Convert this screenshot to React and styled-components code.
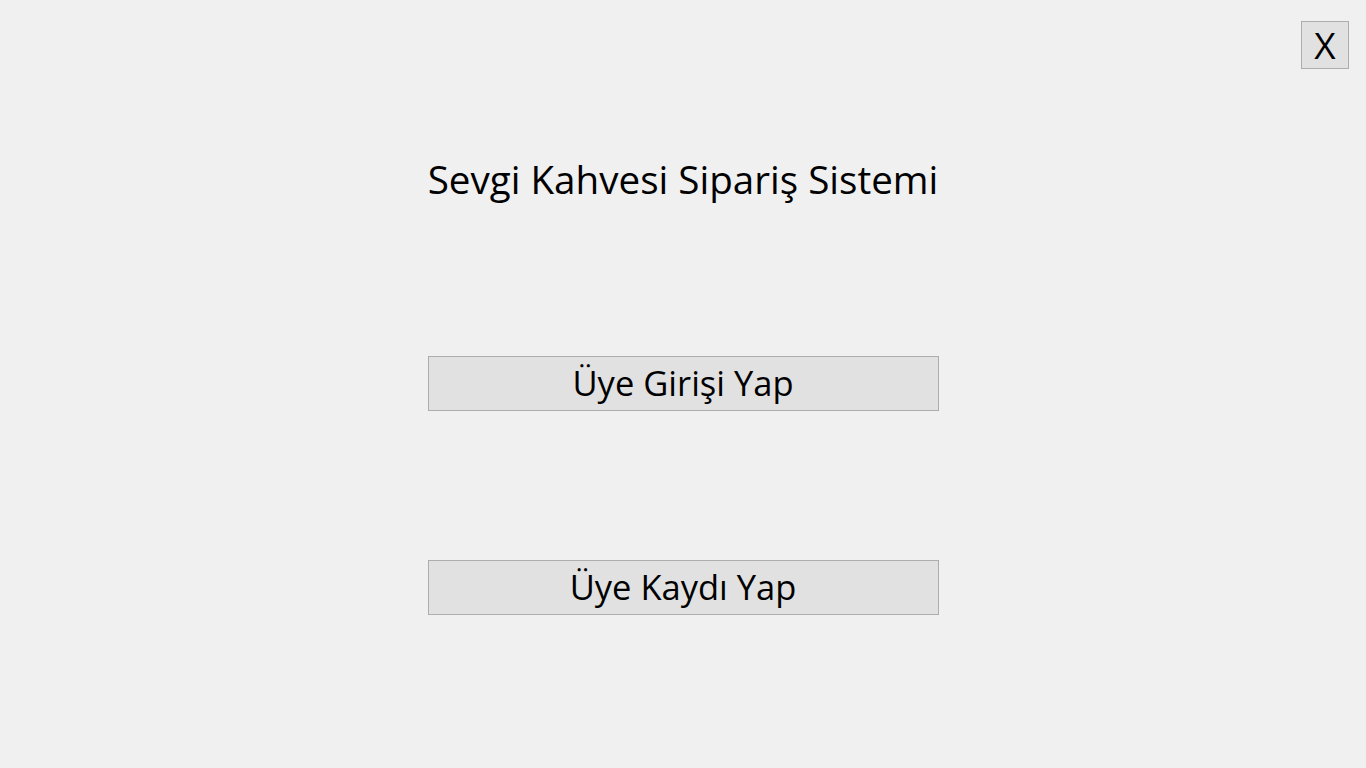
import React from "react";
import styled, { createGlobalStyle } from "styled-components";

const Global = createGlobalStyle`
  html, body { margin: 0; padding: 0; background: #f0f0f0; }
  body { font-family: "Open Sans", "Noto Sans", sans-serif; color: #000; }
`;

const Page = styled.div`
  height: 768px;
  display: flex;
  flex-direction: column;
  padding: 21px 17px 0 0;
  box-sizing: border-box;
`;

const Header = styled.div`
  display: flex;
  justify-content: flex-end;
`;

const CloseButton = styled.button`
  width: 48px;
  height: 48px;
  padding: 0;
  margin: 0;
  background: #e1e1e1;
  border: 1px solid #adadad;
  font-family: inherit;
  font-size: 37px;
  line-height: 46px;
  color: #000;
  display: flex;
  align-items: center;
  justify-content: center;
`;

const Main = styled.div`
  width: 511px;
  margin: 0 auto;
  padding-left: 17px;
  display: flex;
  flex-direction: column;
  align-items: stretch;
`;

const Title = styled.h1`
  margin: 90px 0 0 0;
  font-size: 38.6px;
  font-weight: 400;
  line-height: 40px;
  text-align: center;
  white-space: nowrap;
`;

const ActionButton = styled.button`
  margin-top: ${(p) => p.$gap}px;
  height: 55px;
  width: 511px;
  background: #e1e1e1;
  border: 1px solid #adadad;
  font-family: inherit;
  font-size: 34.5px;
  line-height: 50px;
  color: #000;
  padding: 0 0 2px 0;
  white-space: nowrap;
`;

export default function App() {
  return (
    <>
      <Global />
      <Page>
        <Header>
          <CloseButton>X</CloseButton>
        </Header>
        <Main>
          <Title>Sevgi Kahvesi Sipariş Sistemi</Title>
          <ActionButton $gap={157}>Üye Girişi Yap</ActionButton>
          <ActionButton $gap={149}>Üye Kaydı Yap</ActionButton>
        </Main>
      </Page>
    </>
  );
}
